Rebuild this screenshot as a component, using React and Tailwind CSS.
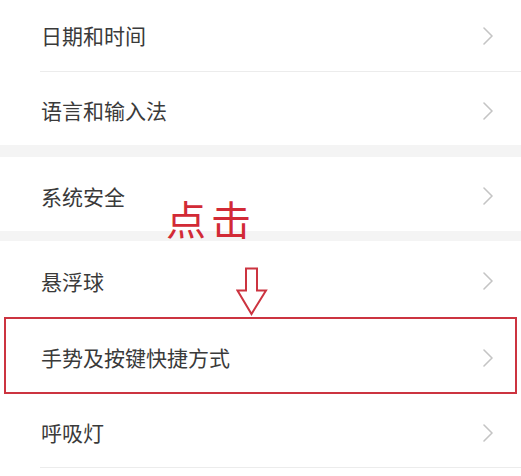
const Chevron = () => (
  <svg width="12" height="20" viewBox="0 0 12 20" fill="none" className="shrink-0">
    <path d="M3 2l8 8-8 8" stroke="#c4c4c4" strokeWidth="1.6" strokeLinecap="round" strokeLinejoin="round" />
  </svg>
);

const Row = ({ label, h, pt = "pt-[4px]", divider = true }) => (
  <div className="flex flex-col">
    <div className={`flex items-center justify-between pl-[41px] pr-[28px] ${pt} ${h}`}>
      <span className="text-[21px] text-[#3a3a3a] leading-none">{label}</span>
      <Chevron />
    </div>
    {divider && <div className="ml-[40px] h-px bg-[#ececec]" />}
  </div>
);

const Gap = ({ h }) => <div className={`${h} bg-[#f4f4f4]`} />;

export default function App() {
  return (
    <div
      className="relative w-[521px] h-[476px] overflow-hidden bg-white"
      style={{ fontFamily: '"Noto Sans CJK SC", "Noto Sans", sans-serif' }}
    >
      <Row label="日期和时间" h="h-[71px]" pt="pt-0" />
      <Row label="语言和输入法" h="h-[73px]" divider={false} />
      <Gap h="h-[12px]" />
      <Row label="系统安全" h="h-[74px]" divider={false} />
      <Gap h="h-[10px]" />
      <Row label="悬浮球" h="h-[76px]" divider={false} />
      <div className="relative">
        <Row label="手势及按键快捷方式" h="h-[77px]" divider={false} />
        <div className="absolute left-[4px] right-[4px] top-0 bottom-0 border-2 border-[#cc3440]" />
      </div>
      <Row label="呼吸灯" h="h-[73px]" />

      <span className="absolute left-[166px] top-[198px] text-[40px] leading-none text-[#d22a36] tracking-[5px]">
        点击
      </span>
      <svg className="absolute left-[236px] top-[267px]" width="32" height="50" viewBox="0 0 32 50" fill="none">
        <path d="M10 1.5h11v22h9L15.5 47 1.5 23.5h8.5z" stroke="#cc3440" strokeWidth="2" strokeLinejoin="miter" fill="white" />
      </svg>
    </div>
  );
}
